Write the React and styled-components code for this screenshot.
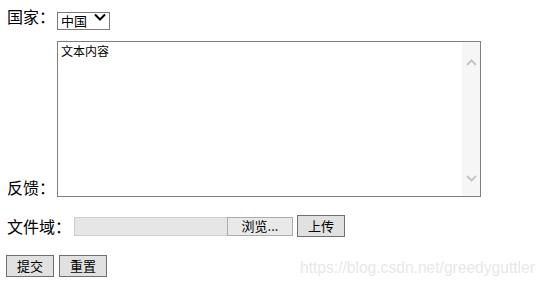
import React from "react";
import styled, { createGlobalStyle } from "styled-components";

const Global = createGlobalStyle`
  html, body { margin: 0; padding: 0; background: #fff; }
  body {
    font-family: "Noto Sans CJK SC", "Liberation Sans", sans-serif;
    font-size: 16px;
    color: #000;
  }
`;

const Page = styled.form`
  position: relative;
  width: 546px;
  height: 291px;
  box-sizing: border-box;
  padding: 7px 0 0 7px;
  display: flex;
  flex-direction: column;
`;

const Row = styled.div`
  display: flex;
  align-items: ${(p) => p.$align || "center"};
  height: ${(p) => p.$h}px;
  margin-top: ${(p) => p.$mt || 0}px;
  margin-left: ${(p) => p.$ml || 0}px;
`;

const Label = styled.label`
  font-size: 16px;
  line-height: 16px;
  white-space: nowrap;
  width: ${(p) => p.$w}px;
  margin-bottom: ${(p) => p.$mb || 0}px;
`;

const SelectWrap = styled.div`
  position: relative;
  width: 53px;
  height: 18px;
`;

const Select = styled.select`
  appearance: none;
  -webkit-appearance: none;
  width: 53px;
  height: 18px;
  box-sizing: border-box;
  border: 1px solid #7a7a7a;
  border-radius: 0;
  background: #fff;
  padding: 0 0 0 3px;
  font-family: "Noto Sans CJK SC", sans-serif;
  font-size: 13px;
  line-height: 16px;
  color: #000;
  outline: none;
`;

const Chevron = styled.svg`
  position: absolute;
  right: 4px;
  top: 6px;
  pointer-events: none;
`;

const AreaWrap = styled.div`
  position: relative;
  width: 424px;
  height: 156px;
`;

const TextArea = styled.textarea`
  width: 424px;
  height: 156px;
  box-sizing: border-box;
  border: 1px solid #7f7f7f;
  border-radius: 0;
  padding: 1px 20px 1px 3px;
  margin: 0;
  resize: none;
  overflow: hidden;
  font-family: "Noto Sans CJK SC", sans-serif;
  font-size: 12px;
  line-height: 16px;
  color: #000;
  outline: none;
  display: block;
`;

const ScrollBar = styled.div`
  position: absolute;
  top: 1px;
  right: 1px;
  bottom: 1px;
  width: 18px;
  background: #f6f6f6;
  display: flex;
  flex-direction: column;
  justify-content: space-between;
  align-items: center;
  padding: 17px 0 14px;
  box-sizing: border-box;
  pointer-events: none;
`;

const FileBox = styled.div`
  display: flex;
  height: 19px;
  margin-left: 3px;
`;

const FilePath = styled.div`
  width: 153px;
  height: 19px;
  box-sizing: border-box;
  background: #e6e6e6;
  border: 1px solid #cfcfcf;
  border-right: none;
`;

const Browse = styled.button`
  width: 66px;
  height: 19px;
  box-sizing: border-box;
  border: 1px solid #adadad;
  background: #e9e9e9;
  border-radius: 0;
  padding: 0;
  font-family: "Noto Sans CJK SC", sans-serif;
  font-size: 13px;
  line-height: 16px;
  color: #000;
`;

const Btn = styled.button`
  width: ${(p) => p.$w || 48}px;
  height: 22px;
  box-sizing: border-box;
  border: 1px solid #707070;
  border-radius: 0;
  background: #e1e1e1;
  padding: 0;
  margin-left: ${(p) => p.$ml || 0}px;
  font-family: "Noto Sans CJK SC", sans-serif;
  font-size: 13px;
  line-height: 16px;
  color: #000;
`;

const Watermark = styled.div`
  position: absolute;
  left: 300px;
  top: 259px;
  font-family: "Liberation Sans", Arial, sans-serif;
  font-size: 15.6px;
  line-height: 18px;
  color: #e8e8e8;
  white-space: nowrap;
  pointer-events: none;
`;

export default function App() {
  return (
    <>
      <Global />
      <Page onSubmit={(e) => e.preventDefault()}>
        <Row $h={18}>
          <Label $w={50}>国家：</Label>
          <SelectWrap>
            <Select defaultValue="cn">
              <option value="cn">中国</option>
              <option value="us">美国</option>
            </Select>
            <Chevron width="12" height="8" viewBox="0 0 12 8">
              <path d="M1 1.5 L6 6.5 L11 1.5" fill="none" stroke="#000" strokeWidth="2" />
            </Chevron>
          </SelectWrap>
        </Row>
        <Row $h={156} $mt={16} $align="flex-end">
          <Label $w={50} $mb={2}>反馈：</Label>
          <AreaWrap>
            <TextArea defaultValue="文本内容" />
            <ScrollBar>
              <svg width="11" height="7" viewBox="0 0 11 7">
                <path d="M1 6 L5.5 1.5 L10 6" fill="none" stroke="#c6c6c6" strokeWidth="2" />
              </svg>
              <svg width="11" height="7" viewBox="0 0 11 7">
                <path d="M1 1 L5.5 5.5 L10 1" fill="none" stroke="#c6c6c6" strokeWidth="2" />
              </svg>
            </ScrollBar>
          </AreaWrap>
        </Row>
        <Row $h={22} $mt={18}>
          <Label $w={64}>文件域：</Label>
          <FileBox>
            <FilePath />
            <Browse type="button">浏览...</Browse>
          </FileBox>
          <Btn type="button" $ml={4}>上传</Btn>
        </Row>
        <Row $h={22} $mt={18} $ml={-1}>
          <Btn type="submit">提交</Btn>
          <Btn type="reset" $ml={5}>重置</Btn>
        </Row>
        <Watermark>https://blog.csdn.net/greedyguttler</Watermark>
      </Page>
    </>
  );
}
